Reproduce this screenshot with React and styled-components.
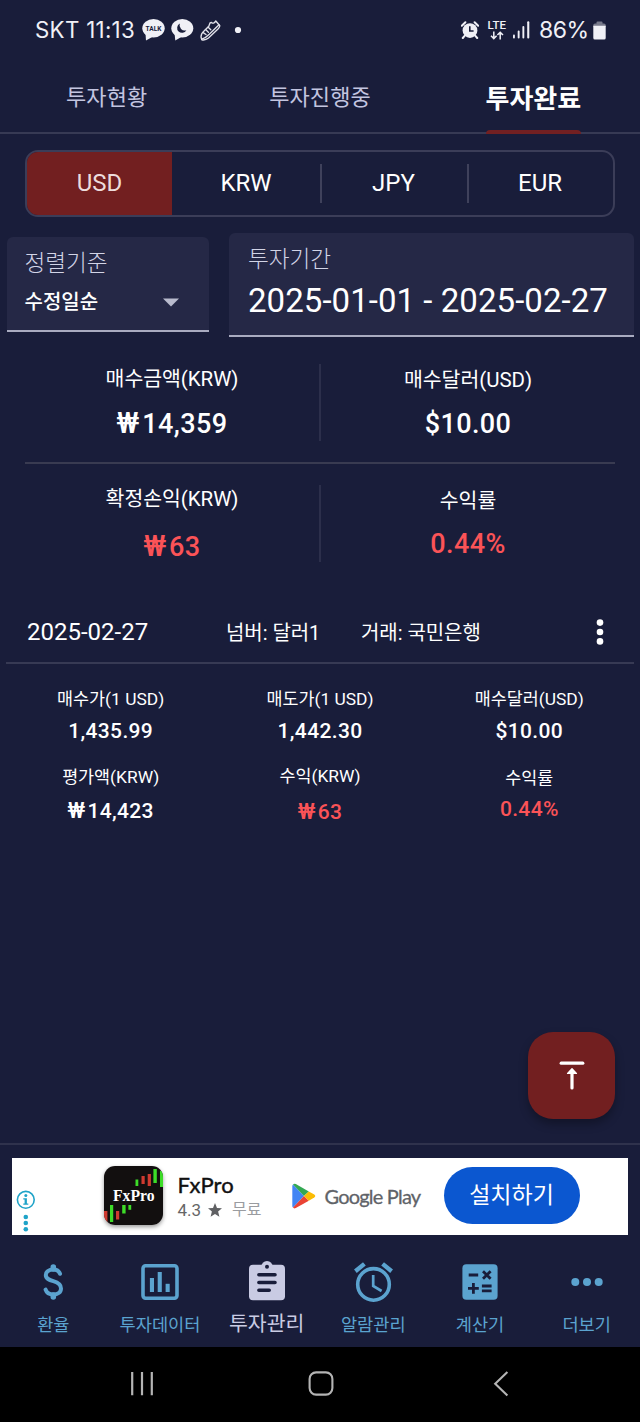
import { useState } from "react"
import styled, { createGlobalStyle } from "styled-components"

const GlobalStyle = createGlobalStyle`
    * {
        box-sizing: border-box;
    }
    body {
        margin: 0;
        background-color: #191d3a;
        font-family: Roboto, "Noto Sans CJK KR", sans-serif;
        color: #fff;
    }
    button {
        font-family: inherit;
        border: none;
        padding: 0;
        background: none;
        color: inherit;
        cursor: pointer;
    }
    svg {
        display: block;
        flex: none;
    }
`
const Screen = styled.div`
    position: relative;
    display: flex;
    flex-direction: column;
    width: 640px;
    height: 1422px;
    overflow: hidden;
    background-color: #191d3a;
    white-space: nowrap;
`
const StatusBar = styled.header`
    display: flex;
    align-items: center;
    justify-content: space-between;
    height: 60px;
    padding: 0 34.5px 0 35px;
    color: #f0f0f6;
`
const StatusGroup = styled.div`
    display: flex;
    align-items: center;
    gap: ${props => props.$gap}px;
`
const StatusText = styled.span`
    font-family: Inter, "Noto Sans CJK KR", sans-serif;
    font-size: ${props => props.$size}px;
    letter-spacing: ${props => props.$spacing}px;
    line-height: 30px;
`
const LteBadge = styled.span`
    display: flex;
    flex-direction: column;
    align-items: center;
    margin-right: -2px;
    font-size: 11.5px;
    font-weight: 500;
    line-height: 11px;
`
const Tabs = styled.nav`
    display: grid;
    grid-template-columns: repeat(3, 1fr);
    height: 74px;
    border-bottom: 2px solid #373a54;
`
const Tab = styled.button`
    display: flex;
    flex-direction: column;
    align-items: center;
    justify-content: space-between;
    padding-top: ${props => props.$active ? 21 : 20}px;
    margin-bottom: -2px;
    line-height: 36px;
    font-size: ${props => props.$active ? 26 : 22}px;
    font-weight: ${props => props.$active ? 700 : 400};
    letter-spacing: ${props => props.$active ? "0" : "0.1px"};
    color: ${props => props.$active ? "#fff" : "#c3c5e0"};
`
const Indicator = styled.span`
    width: 95px;
    height: 4px;
    border-radius: 4px 4px 0 0;
    background-color: #722022;
`
const Currencies = styled.div`
    display: grid;
    grid-template-columns: 145px 148px 147px 1fr;
    height: 67px;
    margin: 16px 25px 0;
    border: 2px solid #3b3d58;
    border-radius: 13px;
    overflow: hidden;
`
const Currency = styled.button`
    display: flex;
    align-items: center;
    justify-content: center;
    padding-bottom: 2px;
    font-size: 24px;
    background-color: ${props => props.$active ? "#721f20" : "transparent"};
    color: ${props => props.$active ? "#eddcdc" : "#fff"};
    background-image: ${props => props.$divider ? "linear-gradient(#3f415b, #3f415b)" : "none"};
    background-size: 2px 39px;
    background-position: left center;
    background-repeat: no-repeat;
`
const Filters = styled.div`
    display: flex;
    align-items: center;
    justify-content: space-between;
    height: 104px;
    margin: 15.5px 6px 0 6.5px;
`
const Field = styled.div`
    width: ${props => props.$wide ? 405 : 202.5}px;
    height: ${props => props.$wide ? 104 : 95}px;
    padding: ${props => props.$wide ? "11px 19px 0" : "11px 18px 0"};
    border-bottom: 2px solid #a9abc0;
    border-radius: 6px 6px 0 0;
    background-color: #252846;
`
const FieldLabel = styled.div`
    font-weight: 300;
    font-size: 22.6px;
    line-height: 32px;
    color: #d2d4e6;
`
const SortValue = styled.div`
    display: flex;
    align-items: center;
    gap: 65px;
    font-size: 20px;
    font-weight: 500;
    line-height: 34px;
    margin-top: 5px;
`
const Period = styled.div`
    font-size: 33px;
    line-height: 40px;
    margin-top: 5px;
    letter-spacing: 0.05px;
`
const Summary = styled.section`
    margin: 0 25px;
`
const SummaryRow = styled.div`
    display: grid;
    grid-template-columns: 1fr 2px 1fr;
    height: ${props => props.$height}px;
    padding-top: ${props => props.$top}px;
    border-bottom: ${props => props.$line ? "2px solid #393b51" : "none"};
`
const SummaryDivider = styled.span`
    height: 77px;
    background-color: #2c2f4b;
`
const SummaryCell = styled.div`
    text-align: center;
    margin-top: ${props => props.$shift || 0}px;
`
const SummaryLabel = styled.div`
    font-size: 20.5px;
    line-height: 30px;
    letter-spacing: -0.05px;
`
const SummaryValue = styled.div`
    font-size: 27px;
    font-weight: 500;
    line-height: 36px;
    letter-spacing: 0.4px;
    margin-top: ${props => props.$gap}px;
    color: ${props => props.$profit ? "#fb5357" : "#fff"};
`
const Won = styled.span`
    font-size: 1.08em;
    line-height: 0;
    letter-spacing: 0.1em;
`
const Trade = styled.section`
    margin: 0 6px;
`
const TradeHead = styled.div`
    display: flex;
    align-items: center;
    height: 64px;
    padding: 0 30px 0 21px;
    border-bottom: 2px solid #373a54;
`
const TradeDate = styled.span`
    width: 199px;
    font-size: 24px;
    padding-top: 2px;
`
const TradeInfo = styled.span`
    width: ${props => props.$width}px;
    padding-top: 2px;
    font-size: 20px;
    letter-spacing: -0.05px;
`
const MoreButton = styled.button`
    margin-left: auto;
    padding-top: 2px;
`
const TradeGrid = styled.div`
    display: grid;
    grid-template-columns: repeat(3, 1fr);
    grid-auto-rows: 78px;
    padding-top: 21px;
    text-align: center;
`
const TradeCell = styled.div`
    margin-top: ${props => props.$shift || 0}px;
`
const TradeLabel = styled.div`
    font-size: 17.4px;
    line-height: 28px;
`
const TradeValue = styled.div`
    font-size: 21px;
    font-weight: 500;
    line-height: 30px;
    letter-spacing: 0.35px;
    margin-top: ${props => props.$gap}px;
    color: ${props => props.$profit ? "#fb5357" : "#fff"};
`
const TopButton = styled.button`
    position: absolute;
    right: 25px;
    top: 1031.5px;
    display: flex;
    align-items: center;
    justify-content: center;
    width: 87px;
    height: 87px;
    border-radius: 25px;
    background-color: #721f20;
    box-shadow: 0 5px 10px rgba(0, 0, 0, 0.3);
`
const AdArea = styled.aside`
    margin-top: auto;
    padding: 13px 12px 0;
    border-top: 2px solid #2f324c;
`
const Ad = styled.div`
    display: flex;
    align-items: center;
    height: 77px;
    padding-bottom: 2px;
    background-color: #fff;
`
const AdMarks = styled.div`
    align-self: flex-end;
    width: 91.5px;
    padding: 0 0 0 4px;
`
const AdInfo = styled.div`
    width: 114.5px;
    margin-left: 15px;
    padding-top: 2px;
`
const AdName = styled.div`
    font-family: Lato, sans-serif;
    font-size: 22px;
    line-height: 26px;
    letter-spacing: 0.1px;
    -webkit-text-stroke: 0.4px #111;
    color: #111;
`
const AdRating = styled.div`
    display: flex;
    align-items: center;
    gap: 7px;
    line-height: 24px;
    font-size: 17px;
    color: #666;
`
const Free = styled.span`
    font-size: 16px;
    margin-left: 3px;
    color: #9a9ca0;
`
const StoreName = styled.span`
    width: 119px;
    margin-left: 8.5px;
    font-family: Lato, sans-serif;
    font-size: 20px;
    line-height: 28px;
    letter-spacing: -0.8px;
    color: #5f6368;
    -webkit-text-stroke: 0.3px #5f6368;
`
const InstallButton = styled.button`
    width: 136px;
    height: 56.5px;
    border-radius: 29px;
    background-color: #0b57d0;
    color: #fff;
    font-size: 23px;
    line-height: 54px;
`
const BottomNav = styled.nav`
    display: grid;
    grid-template-columns: repeat(6, 1fr);
    height: 112px;
    padding-top: 24.5px;
`
const NavItem = styled.button`
    display: flex;
    flex-direction: column;
    align-items: center;
    justify-content: flex-start;
    color: ${props => props.$active ? "#c9cbe3" : "#5ba3cf"};
`
const NavIcon = styled.span`
    display: flex;
    align-items: center;
    justify-content: center;
    height: 45px;
`
const NavLabel = styled.span`
    font-size: ${props => props.$active ? 20.5 : 17.6}px;
    line-height: 30px;
    margin-top: ${props => props.$active ? 4 : 5}px;
`
const SystemNav = styled.footer`
    display: grid;
    grid-template-columns: repeat(3, 179.5px);
    justify-items: center;
    height: 75px;
    padding: 24px 0 0 52px;
    background-color: #000;
    color: #b4b4b4;
`

const TalkIcon = () => (
    <svg width="23" height="22" viewBox="0 0 23 22" fill="#f0f0f6">
        <ellipse cx="11.5" cy="9.2" rx="11.2" ry="9.2" />
        <path d="M3.5 14 L4 21.6 L12 17 Z" />
        <text x="3.6" y="12.2" fontFamily="Roboto" fontWeight="700" fontSize="7.8" textLength="15.8" lengthAdjust="spacingAndGlyphs" fill="#191d3a">TALK</text>
    </svg>
)
const MoonBubbleIcon = () => (
    <svg width="22.5" height="22" viewBox="0 0 22.5 22" fill="#f0f0f6">
        <ellipse cx="11.3" cy="9.2" rx="11" ry="9.2" />
        <path d="M3.5 14 L4.3 21.6 L12 17 Z" />
        <path d="M8.8 4.6 A4.9 4.9 0 1 0 15.4 11.2 A5.2 5.2 0 0 1 8.8 4.6 Z" fill="#191d3a" />
    </svg>
)
const ShoeIcon = () => (
    <svg width="21" height="21" viewBox="0 0 21 21" fill="none" stroke="#e2e2ea" strokeWidth="1.35" strokeLinejoin="round" strokeLinecap="round">
        <path d="M1 17 Q1 13.5 4 11 L8.8 6.2 L10 3 L11.5 2.4 Q13.5 4.4 15.8 1 L19.8 5.8 Q19.5 7.5 18 9 L8.5 18 Q5.5 20.5 1.8 19.8 Z" />
        <path d="M1.8 19.2 Q6 17.6 9 14.5 L19 4.8" />
        <path d="M3.2 12.6 L6 14.5 M5.6 9.6 L8.4 12.2 M8.2 7.2 L10.8 9.8" />
    </svg>
)
const SmallAlarmIcon = () => (
    <svg width="18" height="18" viewBox="0 0 18 18" fill="#f0f0f6">
        <circle cx="9" cy="9.6" r="7.4" />
        <path d="M0.8 4.8 L4.4 1.3 M17.2 4.8 L13.6 1.3 M3.6 14.8 L1.8 17 M14.4 14.8 L16.2 17" stroke="#f0f0f6" strokeWidth="2" strokeLinecap="round" />
        <path d="M8.8 5.2 V10 H12.6" fill="none" stroke="#191d3a" strokeWidth="1.6" />
    </svg>
)
const DataArrowsIcon = () => (
    <svg width="14" height="9" viewBox="0 0 14 9" fill="none" stroke="#f0f0f6" strokeWidth="1.5">
        <path d="M3.8 0.4 V7.4 M1 4.8 L3.8 7.6 L6.6 4.8 M10.2 8.4 V1.4 M7.4 4 L10.2 1.2 L13 4" />
    </svg>
)
const SignalIcon = () => (
    <svg width="17" height="18" viewBox="0 0 17 18" fill="#f0f0f6">
        <rect x="0" y="13.5" width="1.9" height="4" rx="0.9" />
        <rect x="4.7" y="9.5" width="1.9" height="8" rx="0.9" />
        <rect x="9.4" y="5" width="1.9" height="12.5" rx="0.9" />
        <rect x="14.2" y="0.3" width="2.1" height="17.2" rx="0.9" />
    </svg>
)
const BatteryIcon = () => (
    <svg width="13" height="19" viewBox="0 0 13 19">
        <path d="M0.3 6 V4 Q0.3 2.5 2 2.5 H3.5 V1.3 Q3.5 0.5 4.5 0.5 H8.5 Q9.5 0.5 9.5 1.3 V2.5 H11 Q12.7 2.5 12.7 4 V6 Z" fill="#77798a" />
        <path d="M0.3 4.8 H12.7 V17 Q12.7 18.5 11.2 18.5 H1.8 Q0.3 18.5 0.3 17 Z" fill="#f0f0f6" />
    </svg>
)
const AdInfoIcon = () => (
    <svg width="19" height="43" viewBox="0 0 19 43" fill="#1fa3c8">
        <circle cx="9.8" cy="9.8" r="8.4" fill="none" stroke="#1fa3c8" strokeWidth="1.6" />
        <circle cx="9.8" cy="5.6" r="1.5" />
        <path d="M7.3 8.2 H10.9 V13.4 H12.3 V14.8 H7.3 V13.4 H8.6 V9.6 H7.3 Z" />
        <circle cx="9.8" cy="27" r="2.3" />
        <circle cx="9.8" cy="33" r="2.3" />
        <circle cx="9.8" cy="39.3" r="2.3" />
    </svg>
)
const FxProLogo = styled.svg`
    border-radius: 11px;
    box-shadow: 0 2px 4px rgba(0, 0, 0, 0.4);
`
const FxProIcon = () => (
    <FxProLogo width="59" height="59" viewBox="0 0 59 59">
        <rect width="59" height="59" fill="#120f0f" />
        <g fill="#3ddc28">
            <rect x="31.5" y="13.5" width="2.8" height="6.5" />
            <rect x="49.4" y="3" width="3.4" height="14" />
            <rect x="56" y="5" width="3" height="16" />
            <rect x="6" y="39" width="3.2" height="17" />
            <rect x="18.2" y="39" width="3.4" height="8.5" />
            <rect x="24.4" y="39" width="2.8" height="4.8" />
        </g>
        <g fill="#cf3a30">
            <rect x="37.5" y="10" width="3.2" height="8" />
            <rect x="43.7" y="8" width="3.2" height="12" />
            <rect x="0" y="45" width="3.4" height="12" />
            <rect x="12" y="45" width="3.2" height="8.5" />
        </g>
        <text x="9" y="34.7" fontFamily="Liberation Serif" fontWeight="700" fontSize="16.5" textLength="41.5" lengthAdjust="spacingAndGlyphs" fill="#fff">FxPro</text>
    </FxProLogo>
)
const PlayIcon = () => (
    <svg width="24" height="26" viewBox="0 0 24 26">
        <path d="M1 1.5 Q0.3 2 0.3 3 V23 Q0.3 24 1 24.6 L12 13 Z" fill="#4285f4" />
        <path d="M1 1.5 Q2 0.2 3.8 1 L16.8 8.4 L12 13 Z" fill="#34a853" />
        <path d="M1 24.6 Q2 26 3.8 25 L16.8 17.7 L12 13 Z" fill="#ea4335" />
        <path d="M16.8 8.4 L22.3 11.6 Q24.2 13 22.3 14.4 L16.8 17.7 L12 13 Z" fill="#fbbc04" />
    </svg>
)
const DollarIcon = () => (
    <svg width="23" height="36" viewBox="0 0 23 36" fill="none" stroke="currentColor" strokeWidth="4" strokeLinecap="round">
        <path d="M18 9.8 C16.8 6.8 14.5 5.6 11.3 5.6 C6.8 5.6 3.8 7.6 3.8 11 C3.8 14.8 7.2 16 11.3 17.2 C15.8 18.5 19 20.4 19 24.4 C19 28.4 15.6 30.4 11.3 30.4 C7.4 30.4 4.6 28.8 3.6 25.6" />
        <path d="M11.3 3 V5 M11.3 31 V33" strokeWidth="5.6" />
    </svg>
)
const ChartIcon = () => (
    <svg width="38" height="36" viewBox="0 0 38 36" fill="currentColor">
        <rect x="2" y="1.8" width="34" height="32.4" rx="2.6" fill="none" stroke="currentColor" strokeWidth="3.6" />
        <rect x="8.9" y="14" width="4.1" height="14" />
        <rect x="16.7" y="8" width="4.1" height="20" />
        <rect x="24.6" y="19.8" width="4.1" height="8.2" />
    </svg>
)
const ClipboardIcon = () => (
    <svg width="36" height="43" viewBox="0 0 36 43" fill="currentColor">
        <rect x="0" y="3.7" width="36" height="35.6" rx="4" />
        <circle cx="18" cy="5.9" r="5.8" />
        <circle cx="18" cy="5.7" r="2" fill="#191d3a" />
        <path d="M9.9 13.7 H26 M9.9 21.5 H26 M9.9 29.2 H20.2" stroke="#191d3a" strokeWidth="3.6" strokeLinecap="round" />
    </svg>
)
const AlarmIcon = () => (
    <svg width="39" height="40" viewBox="0 0 39 40" fill="none" stroke="currentColor">
        <circle cx="19.5" cy="22.4" r="15.8" strokeWidth="3.6" />
        <path d="M1.4 9.2 L10.4 1.9 M28.6 1.9 L37.6 9.2" strokeWidth="4.4" />
        <path d="M19.2 13 V24 L27.6 29" strokeWidth="2.7" />
    </svg>
)
const CalculatorIcon = () => (
    <svg width="36" height="36" viewBox="0 0 36 36">
        <rect x="0.4" y="0.2" width="35.2" height="35.6" rx="4" fill="currentColor" />
        <path d="M6.7 11 H16.2 M21 7.2 L28.6 14.8 M28.6 7.2 L21 14.8 M6 24.3 H16.8 M11.4 18.9 V29.7 M19.9 22 H29.6 M19.9 26.8 H29.6" stroke="#191d3a" strokeWidth="2.8" />
    </svg>
)
const MoreIcon = () => (
    <svg width="32" height="8" viewBox="0 0 32 8" fill="currentColor">
        <circle cx="4.3" cy="4" r="4" />
        <circle cx="16" cy="4" r="4" />
        <circle cx="27.7" cy="4" r="4" />
    </svg>
)

const tabs = ["투자현황", "투자진행중", "투자완료"]
const currencies = ["USD", "KRW", "JPY", "EUR"]
const tradeCells = [
    { label: "매수가(1 USD)", value: "1,435.99", gap: 3 },
    { label: "매도가(1 USD)", value: "1,442.30", gap: 3 },
    { label: "매수달러(USD)", value: "$10.00", gap: 3 },
    { label: "평가액(KRW)", value: "14,423", won: true, gap: 5 },
    { label: "수익(KRW)", value: "63", won: true, gap: 7, shift: -1, profit: true },
    { label: "수익률", value: "0.44%", gap: 2, shift: 1, profit: true },
]
const navItems = [
    { label: "환율", Icon: DollarIcon },
    { label: "투자데이터", Icon: ChartIcon },
    { label: "투자관리", Icon: ClipboardIcon },
    { label: "알람관리", Icon: AlarmIcon },
    { label: "계산기", Icon: CalculatorIcon },
    { label: "더보기", Icon: MoreIcon },
]

const App = () => {
    const [tab, setTab] = useState("투자완료")
    const [currency, setCurrency] = useState("USD")
    const [page, setPage] = useState("투자관리")

  return (
    <Screen>
        <GlobalStyle />
        <StatusBar>
            <StatusGroup $gap={6.5}>
                <StatusText $size={22.3} $spacing={0.3}>SKT 11:13</StatusText>
                <TalkIcon />
                <MoonBubbleIcon />
                <ShoeIcon />
                <svg width="20" height="8" viewBox="0 0 20 8"><circle cx="10" cy="4" r="3.1" fill="#f0f0f6" /></svg>
            </StatusGroup>
            <StatusGroup $gap={9}>
                <SmallAlarmIcon />
                <LteBadge>
                    LTE
                    <DataArrowsIcon />
                </LteBadge>
                <SignalIcon />
                <StatusGroup $gap={4}>
                    <StatusText $size={23} $spacing={-0.5}>86%</StatusText>
                    <BatteryIcon />
                </StatusGroup>
            </StatusGroup>
        </StatusBar>
        <Tabs>
            {tabs.map(name => (
                <Tab key={name} $active={name === tab} onClick={() => setTab(name)}>
                    {name}
                    {name === tab && <Indicator />}
                </Tab>
            ))}
        </Tabs>
        <Currencies>
            {currencies.map((name, i) => (
                <Currency key={name} $active={name === currency} $divider={i > 1} onClick={() => setCurrency(name)}>
                    {name}
                </Currency>
            ))}
        </Currencies>
        <Filters>
            <Field>
                <FieldLabel>정렬기준</FieldLabel>
                <SortValue>
                    수정일순
                    <svg width="16" height="9" viewBox="0 0 16 9"><path d="M0 0.5 H16 L8 8.5 Z" fill="#b9bbcd" /></svg>
                </SortValue>
            </Field>
            <Field $wide>
                <FieldLabel>투자기간</FieldLabel>
                <Period>2025-01-01 - 2025-02-27</Period>
            </Field>
        </Filters>
        <Summary>
            <SummaryRow $height={127} $top={27} $line>
                <SummaryCell>
                    <SummaryLabel>매수금액(KRW)</SummaryLabel>
                    <SummaryValue $gap={12}><Won>₩</Won>14,359</SummaryValue>
                </SummaryCell>
                <SummaryDivider />
                <SummaryCell $shift={1}>
                    <SummaryLabel>매수달러(USD)</SummaryLabel>
                    <SummaryValue $gap={11}>$10.00</SummaryValue>
                </SummaryCell>
            </SummaryRow>
            <SummaryRow $height={136} $top={21}>
                <SummaryCell $shift={-1}>
                    <SummaryLabel>확정손익(KRW)</SummaryLabel>
                    <SummaryValue $gap={15} $profit><Won>₩</Won>63</SummaryValue>
                </SummaryCell>
                <SummaryDivider />
                <SummaryCell $shift={1}>
                    <SummaryLabel>수익률</SummaryLabel>
                    <SummaryValue $gap={10} $profit>0.44%</SummaryValue>
                </SummaryCell>
            </SummaryRow>
        </Summary>
        <Trade>
            <TradeHead>
                <TradeDate>2025-02-27</TradeDate>
                <TradeInfo $width={135}>넘버: 달러1</TradeInfo>
                <TradeInfo $width={130}>거래: 국민은행</TradeInfo>
                <MoreButton>
                    <svg width="8" height="26" viewBox="0 0 8 26" fill="#fff">
                        <circle cx="4" cy="3.6" r="3.3" />
                        <circle cx="4" cy="13" r="3.3" />
                        <circle cx="4" cy="22.4" r="3.3" />
                    </svg>
                </MoreButton>
            </TradeHead>
            <TradeGrid>
                {tradeCells.map(cell => (
                    <TradeCell key={cell.label} $shift={cell.shift}>
                        <TradeLabel>{cell.label}</TradeLabel>
                        <TradeValue $gap={cell.gap} $profit={cell.profit}>{cell.won && <Won>₩</Won>}{cell.value}</TradeValue>
                    </TradeCell>
                ))}
            </TradeGrid>
        </Trade>
        <TopButton>
            <svg width="28" height="30" viewBox="0 0 28 30" fill="#fff" stroke="#fff" strokeLinecap="round" strokeLinejoin="round">
                <path d="M3.2 3.2 H24.8" strokeWidth="3.2" />
                <path d="M14 13 V28" strokeWidth="3.2" />
                <path d="M14 8.8 L9.6 13.4 H18.4 Z" strokeWidth="1.4" />
            </svg>
        </TopButton>
        <AdArea>
            <Ad>
                <AdMarks><AdInfoIcon /></AdMarks>
                <FxProIcon />
                <AdInfo>
                    <AdName>FxPro</AdName>
                    <AdRating>
                        4.3
                        <svg width="14" height="14" viewBox="0 0 14 14"><path d="M7 0 L9 5 L14 5.3 L10.1 8.6 L11.4 13.7 L7 10.9 L2.6 13.7 L3.9 8.6 L0 5.3 L5 5 Z" fill="#5f6063" /></svg>
                        <Free>무료</Free>
                    </AdRating>
                </AdInfo>
                <PlayIcon />
                <StoreName>Google Play</StoreName>
                <InstallButton>설치하기</InstallButton>
            </Ad>
        </AdArea>
        <BottomNav>
            {navItems.map(({ label, Icon }) => (
                <NavItem key={label} $active={label === page} onClick={() => setPage(label)}>
                    <NavIcon><Icon /></NavIcon>
                    <NavLabel $active={label === page}>{label}</NavLabel>
                </NavItem>
            ))}
        </BottomNav>
        <SystemNav>
            <svg width="24" height="25" viewBox="0 0 24 25" stroke="currentColor" strokeWidth="2.2"><path d="M2.2 1 V24.2 M12 1 V24.2 M21.8 1 V24.2" /></svg>
            <svg width="26" height="25" viewBox="0 0 26 25"><rect x="1.6" y="1.4" width="22.8" height="22.2" rx="6.5" fill="none" stroke="currentColor" strokeWidth="2.1" /></svg>
            <svg width="16" height="26" viewBox="0 0 16 26" fill="none" stroke="currentColor" strokeWidth="2.1"><path d="M14.4 0.9 L2.2 12.7 L14.4 24.5" /></svg>
        </SystemNav>
    </Screen>
  )
}

export default App
